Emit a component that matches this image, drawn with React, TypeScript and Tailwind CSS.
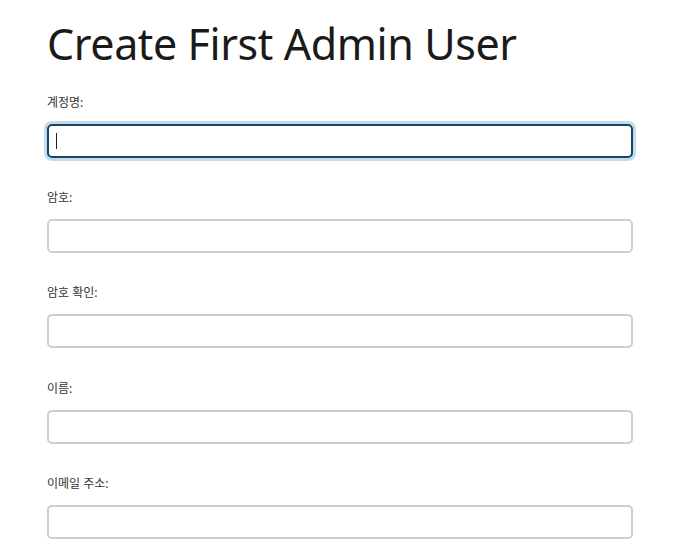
import React from "react";

const fields = ["계정명:", "암호:", "암호 확인:", "이름:", "이메일 주소:"];

export default function App() {
  return (
    <div
      className="bg-white w-[692px] h-[554px] overflow-hidden pl-[47px] pr-[59px]"
      style={{ fontFamily: '"Noto Sans", "Noto Sans CJK KR", sans-serif' }}
    >
      <h1 className="text-[43px] leading-[52px] text-[#1a1a1a] pt-[18px] tracking-[-0.4px] font-normal">
        Create First Admin User
      </h1>
      <div className="flex flex-col mt-[22px]">
        {fields.map((f, i) => (
          <div key={f} className="flex flex-col h-[95.2px]">
            <label className="text-[12px] leading-[16px] text-[#333] mt-[3px]">{f}</label>
            {i === 0 ? (
              <div className="mt-[13px] h-[34px] rounded-[5px] border-2 border-[#12466a] ring-[3px] ring-[#c3dbeb] flex items-center pl-[7px]">
                <div className="w-px h-[16px] bg-[#222]" />
              </div>
            ) : (
              <div className="mt-[13px] h-[34px] rounded-[5px] border-2 border-[#c9d0d3]" />
            )}
          </div>
        ))}
      </div>
    </div>
  );
}
